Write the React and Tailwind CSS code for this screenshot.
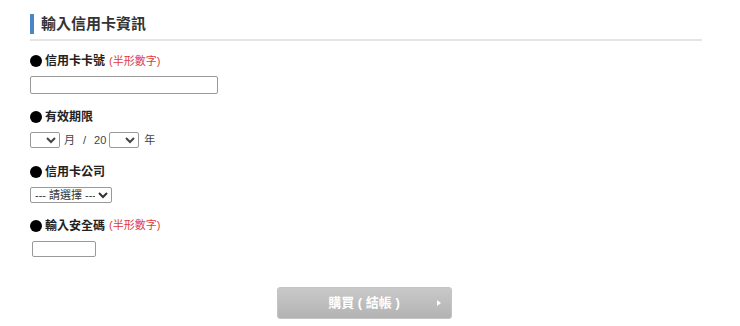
function Label({ text, note }) {
  return (
    <div className="flex items-center h-[16px] text-[12px] font-bold text-[#222]">
      <span className="w-[12px] h-[12px] rounded-full bg-black mr-[3px]"></span>
      <span>{text}</span>
      {note && <span className="ml-[4px] text-[11px] font-normal text-[#e0393e]">{note}</span>}
    </div>
  );
}

export default function App() {
  const font = { fontFamily: '"Liberation Sans", "Noto Sans CJK TC", sans-serif' };
  return (
    <div className="w-[740px] h-[326px] bg-white text-[#333]" style={font}>
      <div className="pl-[30px] pr-[38px] pt-[14px]">
        <div className="border-b-2 border-[#e5e5e5] pb-[5px]">
          <div className="flex items-center h-[20px] border-l-4 border-[#4a86c5] pl-[7px]">
            <span className="text-[15px] font-bold text-[#333]">輸入信用卡資訊</span>
          </div>
        </div>

        <div className="mt-[12px]">
          <Label text="信用卡卡號" note="(半形數字)" />
        </div>
        <input type="text" className="mt-[7px] block w-[188px] h-[18px] border border-[#999] rounded-[2px] bg-white" />

        <div className="mt-[15px]">
          <Label text="有效期限" />
        </div>
        <div className="mt-[7px] flex items-center text-[11px] text-[#444]">
          <select className="w-[30px] h-[16px] border border-[#999] rounded-[2px] bg-white text-[11px]">
            <option></option>
          </select>
          <span className="ml-[4px]">月</span>
          <span className="ml-[8px]">/</span>
          <span className="ml-[8px]">20</span>
          <select className="ml-[3px] w-[30px] h-[16px] border border-[#999] rounded-[2px] bg-white text-[11px]">
            <option></option>
          </select>
          <span className="ml-[5px]">年</span>
        </div>

        <div className="mt-[15px]">
          <Label text="信用卡公司" />
        </div>
        <select className="mt-[7px] block w-[82px] h-[16px] border border-[#999] rounded-[2px] bg-white text-[11px] text-[#333]">
          <option>--- 請選擇 ---</option>
        </select>

        <div className="mt-[15px]">
          <Label text="輸入安全碼" note="(半形數字)" />
        </div>
        <input type="text" className="mt-[7px] ml-[2px] block w-[64px] h-[16px] border border-[#999] rounded-[2px] bg-white" />

        <div className="mt-[30px] flex justify-center pr-[4px]">
          <button className="relative w-[175px] h-[32px] rounded-[3px] border border-[#c4c4c4] bg-gradient-to-b from-[#c9c9c9] to-[#b3b3b3] text-white text-[13px] font-bold flex items-center justify-center">
            <span>購買 ( 結帳 )</span>
            <span className="absolute right-[10px] top-1/2 -translate-y-1/2 w-0 h-0 border-y-[3px] border-y-transparent border-l-[4px] border-l-white"></span>
          </button>
        </div>
      </div>
    </div>
  );
}
